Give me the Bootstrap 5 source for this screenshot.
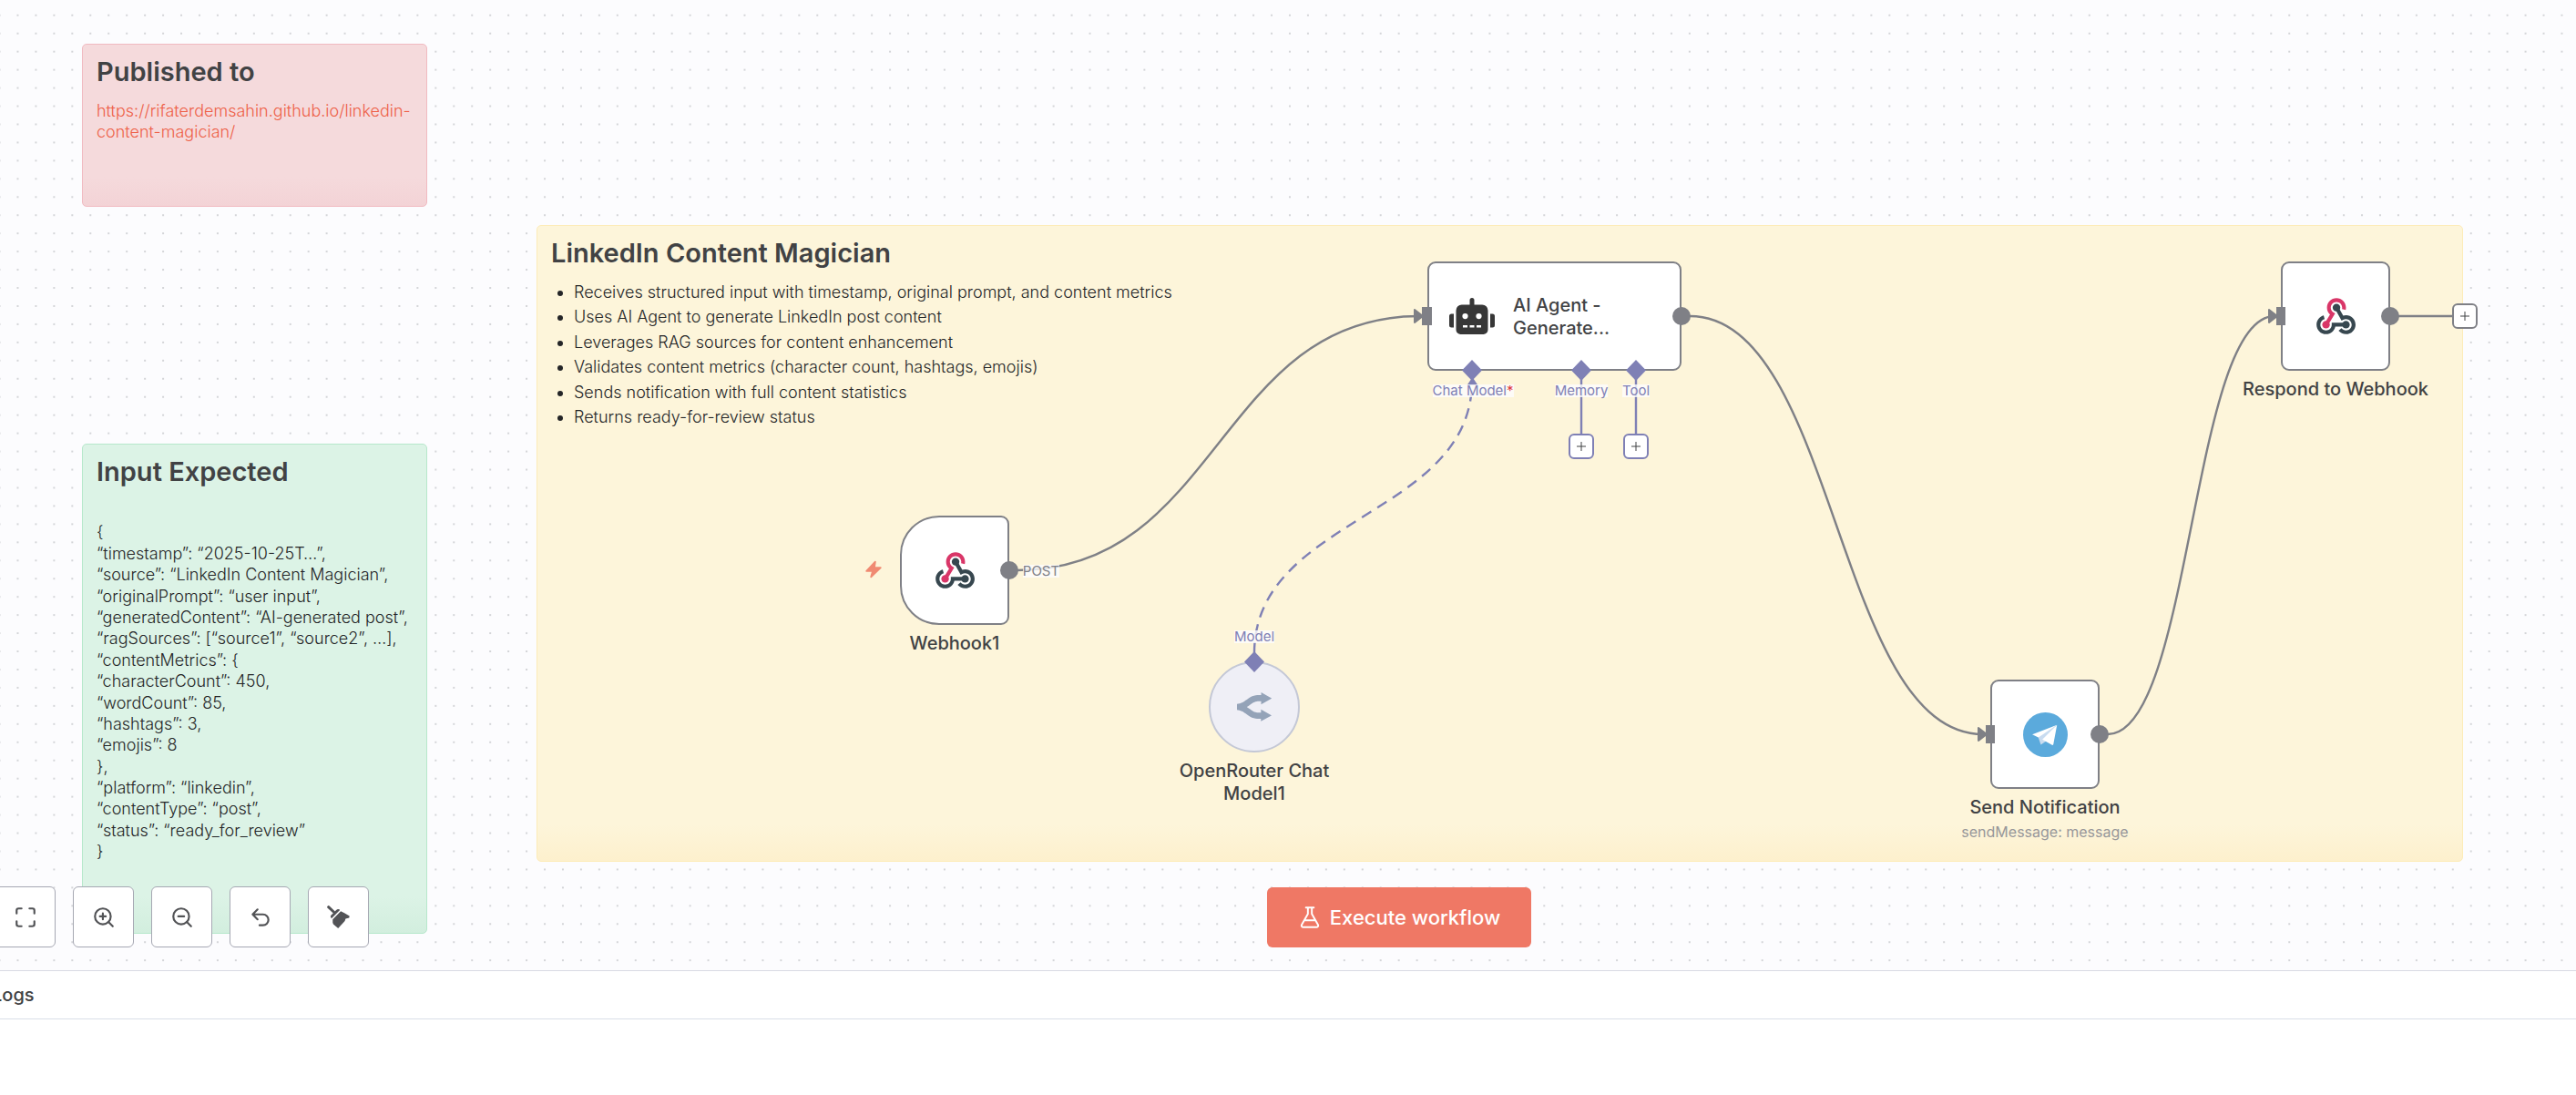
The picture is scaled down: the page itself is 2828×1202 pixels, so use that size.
<!DOCTYPE html>
<html lang="en">
<head>
<meta charset="utf-8">
<meta name="viewport" content="width=device-width, initial-scale=1">
<title>LinkedIn Content Magician - workflow</title>
<link href="https://cdn.jsdelivr.net/npm/bootstrap@5.3.0/dist/css/bootstrap.min.css" rel="stylesheet">
<style>
  :root { --ink:#414244; --wire:#7f8086; --ai:#7f80b5; }
  body { font-family: Inter, "Liberation Sans", sans-serif; color: var(--ink); background:#fff; }
  .flow-canvas { background:#fcfcfe; min-height:1065px; }
  .flow-layer { position:absolute; left:0; top:0; width:100%; height:100%; }

  /* sticky notes */
  .sticky { position:absolute; padding:14px 15px; border:1px solid; border-radius:5px; font-size:18px; font-weight:300; line-height:1.3; color:#242527; }
  .sticky h2 { font-size:29px; line-height:32px; font-weight:600; margin:0 0 15px; color:var(--ink); }
  .sticky ul { margin:0; padding-left:25px; }
  .sticky li { margin-bottom:4px; }
  .sticky a { color:#ee5f47; text-decoration:none; }
  .sticky-pink { left:90px; top:48px; width:379px; height:179px; border-color:#f1bac1; background:linear-gradient(#f5dadc calc(100% - 32px), #f3d3d6); }
  .sticky-green { left:90px; top:487px; width:379px; height:538px; border-color:#b6e8cb; background:linear-gradient(#dcf3e6 calc(100% - 40px), #d2eede); }
  .sticky-yellow { left:589px; top:247px; width:2115px; height:699px; border-color:#fdecb8; background:linear-gradient(#fdf5da calc(100% - 40px), #fdf0cd); }

  /* nodes */
  .wf-node { position:absolute; width:120px; }
  .wf-face { height:120px; background:#fff; border:2px solid var(--wire); border-radius:9px; }
  .wf-trigger .wf-face { border-radius:43px 9px 9px 43px; }
  .wf-agent { width:279px; }
  .wf-agent .wf-face { padding-left:22px; gap:20px; }
  .wf-model { width:100px; }
  .wf-model .wf-face { height:100px; border-radius:50%; background:#efeff6; border-color:#c4c8d6; }
  .wf-name { font-size:20px; line-height:25px; font-weight:500; }
  .wf-agent .wf-name { padding-top:2px; }
  .wf-caption { margin:8px -60px 0; text-align:center; }
  .wf-caption .wf-sub { font-size:16px; line-height:22px; color:#97979a; margin-top:3px; }
  .wf-trigger { left:988px; top:566px; }
  .wf-agent { left:1567px; top:287px; }
  .wf-model { left:1327px; top:726px; }
  .wf-send { left:2185px; top:746px; }
  .wf-respond { left:2504px; top:287px; }
  .trigger-bolt { position:absolute; left:948px; top:614px; }

  /* port labels, centred on their port */
  .port { position:absolute; width:100px; display:flex; justify-content:center; }
  .port span { background:rgba(252,252,254,.8); font-size:15px; line-height:14px; color:var(--ai); white-space:nowrap; }
  .port-post { left:1093px; top:620px; } .port-post span { color:var(--wire); }
  .port-chat { left:1567px; top:422px; }
  .port-memory { left:1686px; top:422px; }
  .port-tool { left:1746px; top:422px; }
  .port-model { left:1327px; top:692px; }
  .port span b { color:#e0393e; font-weight:400; }

  .plus { position:absolute; width:28px; height:28px; padding:0; background:#fff; border:2px solid var(--ai); border-radius:6px; display:flex; align-items:center; justify-content:center; }
  .plus-memory { left:1722px; top:476px; }
  .plus-tool { left:1782px; top:476px; }
  .plus-out { left:2692px; top:333px; border-color:var(--wire); }

  /* controls over the canvas */
  .tool-row { position:absolute; left:-6px; bottom:25px; gap:19px; }
  .tool-btn { width:67px; height:67px; padding:0; background:#fff; border:1px solid #a6a8b3; border-radius:6px; color:#525356; display:flex; align-items:center; justify-content:center; }
  .run-row { position:absolute; left:0; right:-244px; bottom:25px; pointer-events:none; }
  .run-btn { height:66px; padding:0 34px; gap:9px; background:#ef7865; color:#fff; border:0; border-radius:6px; font-size:22px; font-weight:500; pointer-events:auto; }
  .run-btn:hover { background:#e86a56; color:#fff; }

  .logs-panel { min-height:137px; border-top:1px solid #d9dae4; }
  .logs-head { height:53px; border-bottom:1px solid #d9dfe8; font-size:20px; font-weight:500; margin-left:-9px; }
</style>
</head>
<body>
<div class="d-flex flex-column min-vh-100">
  <main class="flow-canvas position-relative overflow-hidden flex-grow-1">
    <svg class="flow-layer" aria-hidden="true">
      <defs>
        <pattern id="dots" width="20" height="20" patternUnits="userSpaceOnUse" patternTransform="translate(9.5 6.8) scale(.9975)">
          <circle cx="10" cy="10" r=".8" fill="#a2a3a8"/>
        </pattern>
      </defs>
      <rect width="100%" height="100%" fill="url(#dots)"/>
    </svg>

    <section class="sticky sticky-pink">
      <h2>Published to</h2>
      <p class="mb-0"><a href="https://rifaterdemsahin.github.io/linkedin-content-magician/">https://rifaterdemsahin.github.io/linkedin-content-magician/</a></p>
    </section>

    <section class="sticky sticky-green">
      <h2>Input Expected</h2>
      <p class="mb-0"><br>{<br>“timestamp”: “2025-10-25T…”,<br>“source”: “LinkedIn Content Magician”,<br>“originalPrompt”: “user input”,<br>“generatedContent”: “AI-generated post”,<br>“ragSources”: [“source1”, “source2”, …],<br>“contentMetrics”: {<br>“characterCount”: 450,<br>“wordCount”: 85,<br>“hashtags”: 3,<br>“emojis”: 8<br>},<br>“platform”: “linkedin”,<br>“contentType”: “post”,<br>“status”: “ready_for_review”<br>}</p>
    </section>

    <section class="sticky sticky-yellow">
      <h2>LinkedIn Content Magician</h2>
      <ul>
        <li>Receives structured input with timestamp, original prompt, and content metrics</li>
        <li>Uses AI Agent to generate LinkedIn post content</li>
        <li>Leverages RAG sources for content enhancement</li>
        <li>Validates content metrics (character count, hashtags, emojis)</li>
        <li>Sends notification with full content statistics</li>
        <li>Returns ready-for-review status</li>
      </ul>
    </section>

    <!-- connections -->
    <svg class="flow-layer" fill="none" stroke-width="2.4" aria-hidden="true">
      <g stroke="#7f8086">
        <path d="M1117 626C1338 626 1338 347 1558 347"/>
        <path d="M1855 347C2016 347 2016 806 2177 806"/>
        <path d="M2314 806C2406 806 2406 347 2497 347"/>
        <path d="M2632 347H2694"/>
      </g>
      <g stroke="#7f80b5">
        <path stroke-dasharray="12 8" d="M1377 717C1377 567 1616 567 1616 418"/>
        <path d="M1736 415V477M1796 415V477"/>
      </g>
      <path fill="#7f80b5" d="M1616.500 414l6 9h-12z"/>
    </svg>

    <svg class="trigger-bolt" width="22" height="22" viewBox="0 0 24 24" fill="#f08a72" stroke="#f08a72" stroke-width="2" stroke-linejoin="round" aria-hidden="true"><path d="M14 3 3.500 14H11l-2 7L20.500 10H13z"/></svg>

    <article class="wf-node wf-trigger">
      <div class="wf-face d-flex align-items-center justify-content-center">
        <svg width="50" height="50" viewBox="0 0 48 48" aria-hidden="true"><g id="hook"><path fill="#37474f" d="M35 37c-2.200 0-4-1.800-4-4s1.800-4 4-4 4 1.800 4 4-1.800 4-4 4"/><path fill="#37474f" d="M35 43c-3 0-5.900-1.400-7.800-3.700l3.100-2.500c1.100 1.400 2.900 2.300 4.700 2.300 3.300 0 6-2.700 6-6s-2.700-6-6-6c-1 0-2 .3-2.900.7l-1.700 1L23.300 16l3.500-1.900 5.300 9.400c1-.3 2-.5 3-.5 5.500 0 10 4.500 10 10S40.500 43 35 43"/><path fill="#37474f" d="M14 43C8.500 43 4 38.500 4 33c0-4.600 3.100-8.500 7.500-9.700l1 3.900C9.900 27.900 8 30.300 8 33c0 3.300 2.700 6 6 6s6-2.700 6-6v-2h15v4H23.800c-.9 4.600-5 8-9.800 8"/><path fill="#d93668" d="M14 37c-2.200 0-4-1.800-4-4s1.800-4 4-4 4 1.800 4 4-1.800 4-4 4"/><path fill="#37474f" d="M25 19c-2.200 0-4-1.800-4-4s1.800-4 4-4 4 1.800 4 4-1.800 4-4 4"/><path fill="#d93668" d="m15.700 34-3.400-2 5.900-9.700c-2-1.900-3.200-4.500-3.200-7.300 0-5.500 4.500-10 10-10s10 4.500 10 10c0 .9-.1 1.700-.3 2.500l-3.900-1c.1-.5.2-1 .2-1.500 0-3.300-2.700-6-6-6s-6 2.700-6 6c0 2.100 1.100 4 2.900 5.100l1.700 1z"/></g></svg>
      </div>
      <div class="wf-caption"><div class="wf-name">Webhook1</div></div>
    </article>

    <article class="wf-node wf-agent">
      <div class="wf-face d-flex align-items-center">
        <svg width="50" height="40" viewBox="0 0 640 512" fill="#373737" aria-hidden="true"><path d="M32 224h32v192H32a32 32 0 0 1-32-32V256a32 32 0 0 1 32-32zm512-48v272a64 64 0 0 1-64 64H160a64 64 0 0 1-64-64V176a80 80 0 0 1 80-80h112V32a32 32 0 0 1 64 0v64h112a80 80 0 0 1 80 80zm-280 80a40 40 0 1 0-40 40 40 40 0 0 0 40-40zm-8 128h-64v32h64zm96 0h-64v32h64zm104-128a40 40 0 1 0-40 40 40 40 0 0 0 40-40zm-8 128h-64v32h64zm192-128v128a32 32 0 0 1-32 32h-32V224h32a32 32 0 0 1 32 32z"/></svg>
        <div class="wf-name">AI Agent -<br>Generate...</div>
      </div>
    </article>

    <article class="wf-node wf-model">
      <div class="wf-face d-flex align-items-center justify-content-center">
        <svg width="38" height="38" viewBox="0 0 24 24" fill="#94a3b8" aria-hidden="true"><path d="M16.804 1.957l7.220 4.105v.087L16.730 10.210l.017-2.117-.821-.03c-1.059-.028-1.611.002-2.268.11-1.064.175-2.038.577-3.147 1.352L8.345 11.030c-.284.195-.495.336-.68.455l-.515.322-.397.234.385.23.53.338c.476.314 1.170.796 2.701 1.866 1.110.775 2.083 1.177 3.147 1.352l.3.045c.694.091 1.375.094 2.825.033l.022-2.159 7.220 4.105v.087L16.589 22l.014-1.862-.635.022c-1.386.042-2.137.002-3.138-.162-1.694-.28-3.260-.926-4.881-2.059l-2.158-1.500a21.997 21.997 0 0 0-.755-.498l-.467-.28a55.927 55.927 0 0 0-.76-.43C2.908 14.730.563 14.116 0 14.116V9.888l.14.004c.564-.007 2.910-.622 3.809-1.124l1.016-.58.438-.274c.428-.28 1.072-.726 2.686-1.853 1.621-1.133 3.186-1.780 4.881-2.059 1.152-.19 1.974-.213 3.814-.138z"/></svg>
      </div>
      <div class="wf-caption"><div class="wf-name">OpenRouter Chat<br>Model1</div></div>
    </article>

    <article class="wf-node wf-send">
      <div class="wf-face d-flex align-items-center justify-content-center">
        <svg width="49" height="49" viewBox="0 0 146 146" aria-hidden="true"><circle cx="73" cy="73" r="73" fill="#5baadc"/><path fill="#c9dcf0" d="M49 79l9 27 20-14 31-50z"/><path fill="#fff" d="M30 72L111 41 50 82z"/><path fill="#fff" d="M111 41L63 89l33 18q2 0 3-3z"/></svg>
      </div>
      <div class="wf-caption"><div class="wf-name">Send Notification</div><div class="wf-sub">sendMessage: message</div></div>
    </article>

    <article class="wf-node wf-respond">
      <div class="wf-face d-flex align-items-center justify-content-center">
        <svg width="50" height="50" viewBox="0 0 48 48" aria-hidden="true"><use href="#hook"/></svg>
      </div>
      <div class="wf-caption"><div class="wf-name">Respond to Webhook</div></div>
    </article>

    <!-- ports -->
    <svg class="flow-layer pe-none" aria-hidden="true">
      <g fill="#7f8086">
        <circle cx="1108" cy="626" r="10"/><circle cx="1846" cy="347" r="10"/><circle cx="2305" cy="806" r="10"/><circle cx="2624" cy="347" r="10"/>
        <path d="M1561 337h11v20h-11zM2180 796h10v20h-10zM2499 337h10v20h-10z"/>
        <path stroke="#7f8086" stroke-linejoin="round" stroke-width="2" d="M1553 340l9 7-9 7zM2172 799l9 7-9 7zM2491 340l9 7-9 7z"/>
      </g>
      <path fill="#7f80b5" d="M1616 395l11 11.500-11 11.500-11-11.500zM1736 395l11 11.500-11 11.500-11-11.500zM1796 395l11 11.500-11 11.500-11-11.500zM1377 715l11 11.500-11 11.500-11-11.500z"/>
    </svg>
    <div class="port port-post"><span>POST</span></div>
    <div class="port port-chat"><span>Chat Model<b>*</b></span></div>
    <div class="port port-memory"><span>Memory</span></div>
    <div class="port port-tool"><span>Tool</span></div>
    <div class="port port-model"><span>Model</span></div>

    <button type="button" class="plus plus-memory" aria-label="Add memory"><svg width="12" height="12" viewBox="0 0 12 12" stroke="#414244"><path d="M6 1v10M1 6h10"/></svg></button>
    <button type="button" class="plus plus-tool" aria-label="Add tool"><svg width="12" height="12" viewBox="0 0 12 12" stroke="#414244"><path d="M6 1v10M1 6h10"/></svg></button>
    <button type="button" class="plus plus-out" aria-label="Add node"><svg width="12" height="12" viewBox="0 0 12 12" stroke="#414244"><path d="M6 1v10M1 6h10"/></svg></button>

    <div class="run-row d-flex justify-content-center">
      <button type="button" class="btn run-btn d-flex align-items-center">
        <svg width="26" height="26" viewBox="0 0 24 24" fill="none" stroke="#fff" stroke-width="1.800" stroke-linecap="round" stroke-linejoin="round" aria-hidden="true"><path d="M10 2v6.500L3.800 19.300A1.800 1.800 0 0 0 5.400 22h13.200a1.800 1.800 0 0 0 1.600-2.700L14 8.500V2M8 2h8M6.800 15h10.400"/></svg>
        <span>Execute workflow</span>
      </button>
    </div>

    <div class="tool-row d-flex">
      <button type="button" class="tool-btn" aria-label="Zoom to fit"><svg width="26" height="26" viewBox="0 0 24 24" fill="none" stroke="currentColor" stroke-width="2" stroke-linecap="round" stroke-linejoin="round"><path d="M8 3H5a2 2 0 0 0-2 2v3M21 8V5a2 2 0 0 0-2-2h-3M3 16v3a2 2 0 0 0 2 2h3M16 21h3a2 2 0 0 0 2-2v-3"/></svg></button>
      <button type="button" class="tool-btn" aria-label="Zoom in"><svg width="26" height="26" viewBox="0 0 24 24" fill="none" stroke="currentColor" stroke-width="2" stroke-linecap="round" stroke-linejoin="round"><circle cx="11" cy="11" r="8"/><path d="m21 21-4.350-4.350M11 8v6M8 11h6"/></svg></button>
      <button type="button" class="tool-btn" aria-label="Zoom out"><svg width="26" height="26" viewBox="0 0 24 24" fill="none" stroke="currentColor" stroke-width="2" stroke-linecap="round" stroke-linejoin="round"><circle cx="11" cy="11" r="8"/><path d="m21 21-4.350-4.350M8 11h6"/></svg></button>
      <button type="button" class="tool-btn" aria-label="Undo"><svg width="26" height="26" viewBox="0 0 24 24" fill="none" stroke="currentColor" stroke-width="2" stroke-linecap="round" stroke-linejoin="round"><path d="M9 14 4 9l5-5M4 9h10.500a5.500 5.500 0 0 1 0 11H11"/></svg></button>
      <button type="button" class="tool-btn" aria-label="Tidy up"><svg width="25" height="25" viewBox="0 0 76 76" fill="currentColor"><path stroke="currentColor" stroke-width="9" stroke-linecap="round" d="M5 5l18 17"/><path d="M12 38q-1-4 3-7l15-15q6-6 11-3l2 2L15 43zM19 46L46 19l12 6 17 10-1 6-12 3q-1 8-8 14L37 76 21 62l-2-5z"/></svg></button>
    </div>
  </main>

  <section class="logs-panel bg-white">
    <div class="logs-head d-flex align-items-center">Logs</div>
  </section>
</div>
<script src="https://cdn.jsdelivr.net/npm/bootstrap@5.3.0/dist/js/bootstrap.bundle.min.js"></script>
</body>
</html>
